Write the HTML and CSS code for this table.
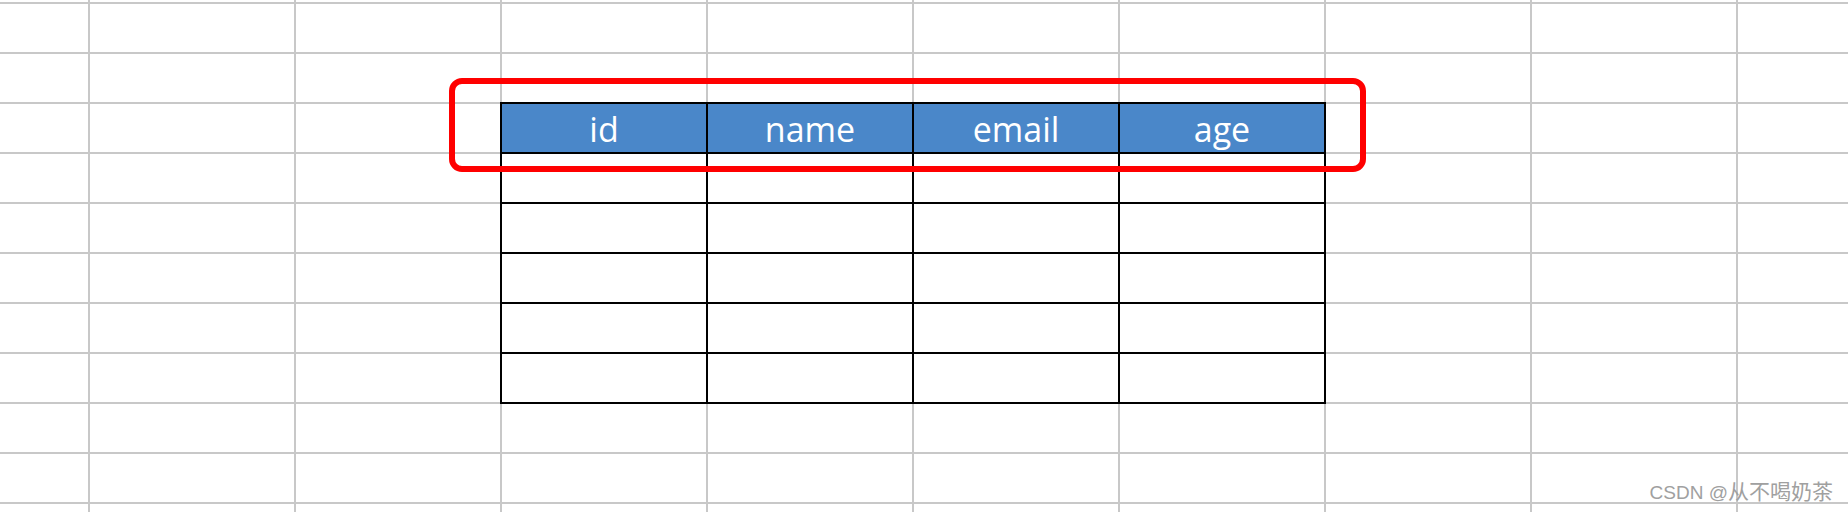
FILE: index.html
```html
<!DOCTYPE html>
<html lang="zh-CN">
<head>
<meta charset="utf-8">
<title>Sheet</title>
<link rel="stylesheet" href="styles.css">
</head>
<body>
<main class="sheet">
  <div class="grid">
    <div class="c"></div><div class="c"></div><div class="c"></div><div class="c"></div><div class="c"></div><div class="c"></div><div class="c"></div><div class="c"></div><div class="c"></div><div class="c"></div>
    <div class="c"></div><div class="c"></div><div class="c"></div><div class="c"></div><div class="c"></div><div class="c"></div><div class="c"></div><div class="c"></div><div class="c"></div><div class="c"></div>
    <div class="c"></div><div class="c"></div><div class="c"></div><div class="c"></div><div class="c"></div><div class="c"></div><div class="c"></div><div class="c"></div><div class="c"></div><div class="c"></div>
    <div class="c"></div><div class="c"></div><div class="c"></div><div class="c t h"><span>id</span></div><div class="c t h"><span>name</span></div><div class="c t h"><span>email</span></div><div class="c t h"><span>age</span></div><div class="c"></div><div class="c"></div><div class="c"></div>
    <div class="c"></div><div class="c"></div><div class="c"></div><div class="c t"></div><div class="c t"></div><div class="c t"></div><div class="c t"></div><div class="c"></div><div class="c"></div><div class="c"></div>
    <div class="c"></div><div class="c"></div><div class="c"></div><div class="c t"></div><div class="c t"></div><div class="c t"></div><div class="c t"></div><div class="c"></div><div class="c"></div><div class="c"></div>
    <div class="c"></div><div class="c"></div><div class="c"></div><div class="c t"></div><div class="c t"></div><div class="c t"></div><div class="c t"></div><div class="c"></div><div class="c"></div><div class="c"></div>
    <div class="c"></div><div class="c"></div><div class="c"></div><div class="c t"></div><div class="c t"></div><div class="c t"></div><div class="c t"></div><div class="c"></div><div class="c"></div><div class="c"></div>
    <div class="c"></div><div class="c"></div><div class="c"></div><div class="c t"></div><div class="c t"></div><div class="c t"></div><div class="c t"></div><div class="c"></div><div class="c"></div><div class="c"></div>
    <div class="c"></div><div class="c"></div><div class="c"></div><div class="c"></div><div class="c"></div><div class="c"></div><div class="c"></div><div class="c"></div><div class="c"></div><div class="c"></div>
    <div class="c"></div><div class="c"></div><div class="c"></div><div class="c"></div><div class="c"></div><div class="c"></div><div class="c"></div><div class="c"></div><div class="c"></div><div class="c"></div>
    <div class="c"></div><div class="c"></div><div class="c"></div><div class="c"></div><div class="c"></div><div class="c"></div><div class="c"></div><div class="c"></div><div class="c"></div><div class="c"></div>
  </div>
  <div class="highlight"></div>
  <div class="watermark">CSDN @<span class="cjk">从不喝奶茶</span></div>
</main>
</body>
</html>
```

FILE: styles.css
```css
* { box-sizing: border-box; }
html, body { margin: 0; padding: 0; }
body {
  background: #fff;
  font-family: "Open Sans", "Noto Sans CJK SC", sans-serif;
  overflow: hidden;
}
.sheet {
  position: relative;
  width: 1848px;
  height: 512px;
  overflow: hidden;
}
.grid {
  display: grid;
  grid-template-columns: 88px repeat(8, 204px) 1fr;
  grid-template-rows: 2px repeat(10, 48px) 1fr;
  gap: 2px;
  height: 512px;
  background: #c8c8c8;
}
.c { background: #fff; min-width: 0; min-height: 0; }
.t { box-shadow: 0 0 0 2px #000; }
.h {
  background: #4a87c9;
  color: #fff;
  font-size: 34px;
  display: flex;
  align-items: flex-end;
  justify-content: center;
  overflow: hidden;
}
.h span { line-height: 46px; }
.highlight {
  position: absolute;
  left: 449px;
  top: 78px;
  width: 917px;
  height: 94px;
  border: 6px solid #ff0000;
  border-radius: 13px;
}
.watermark {
  position: absolute;
  right: 15px;
  top: 479px;
  font-family: "Liberation Sans", "Noto Sans CJK SC", sans-serif;
  font-size: 19px;
  line-height: 22px;
  color: #a0a0a0;
  white-space: nowrap;
}
.watermark .cjk {
  font-family: "Noto Sans CJK SC", sans-serif;
  font-size: 21px;
}
```
